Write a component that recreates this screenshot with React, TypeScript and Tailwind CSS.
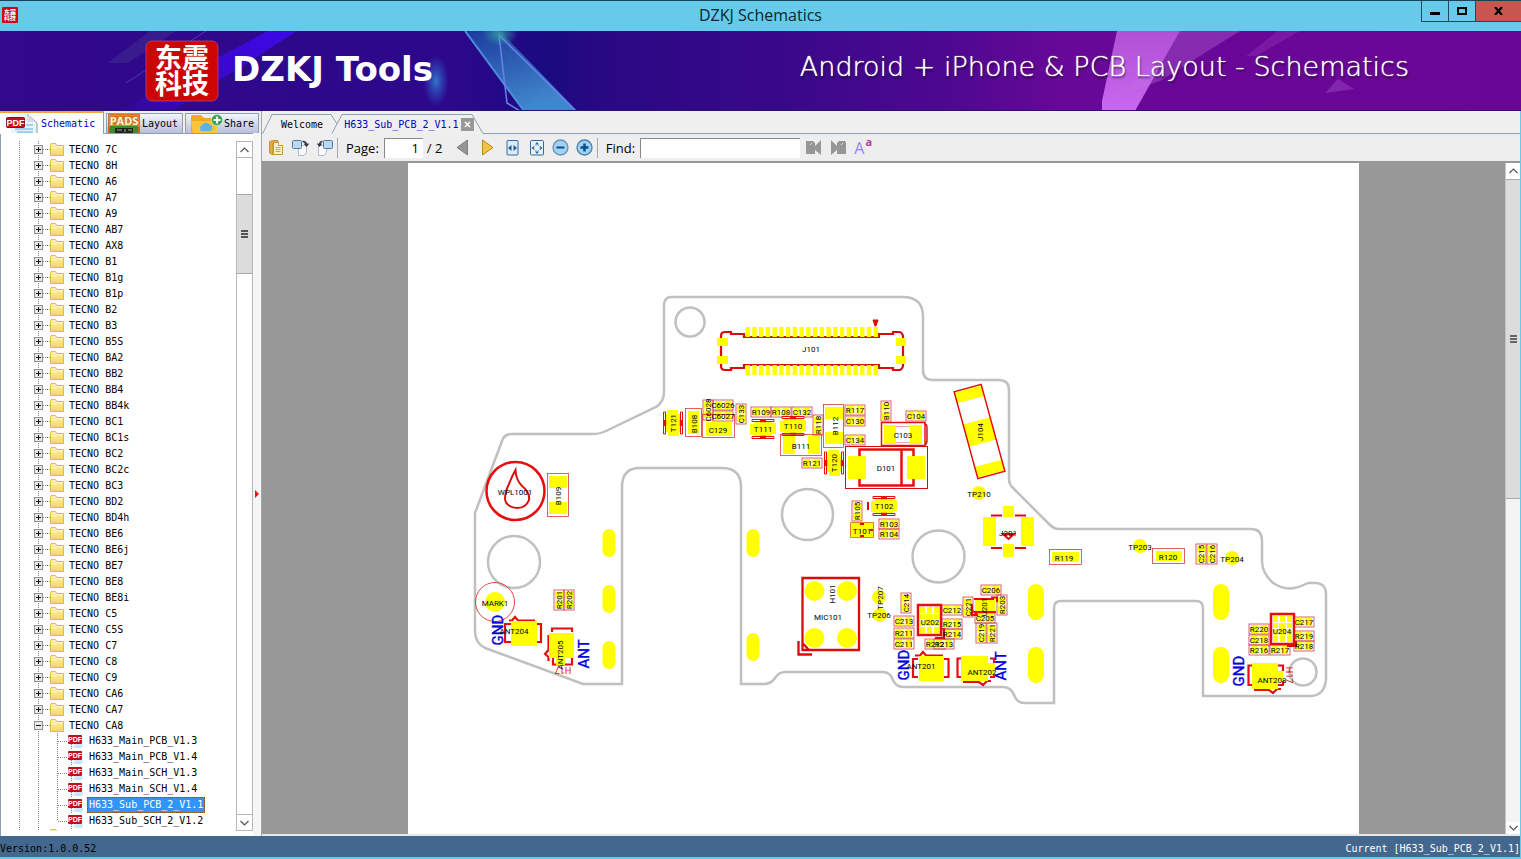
import React, { useState } from 'react';

const MODELS = [
  '7C', '8H', 'A6', 'A7', 'A9', 'AB7', 'AX8', 'B1', 'B1g', 'B1p', 'B2', 'B3', 'B5S',
  'BA2', 'BB2', 'BB4', 'BB4k', 'BC1', 'BC1s', 'BC2', 'BC2c', 'BC3', 'BD2', 'BD4h',
  'BE6', 'BE6j', 'BE7', 'BE8', 'BE8i', 'C5', 'C5S', 'C7', 'C8', 'C9', 'CA6', 'CA7', 'CA8',
];

const FILES = [
  'H633_Main_PCB_V1.3',
  'H633_Main_PCB_V1.4',
  'H633_Main_SCH_V1.3',
  'H633_Main_SCH_V1.4',
  'H633_Sub_PCB_2_V1.1',
  'H633_Sub_SCH_2_V1.2',
];

/* ---------- icons ---------- */

const Seal = ({ className, height }: { className: string; height: number }) => (
  <svg viewBox={`0 0 72 ${height}`} className={`overflow-visible ${className}`} aria-hidden="true">
    <rect width="72" height={height} rx="6" fill="#cc0505" stroke="#e0506a" strokeWidth="0.6" />
    <g fill="#fff" fontFamily='"Noto Sans CJK SC", sans-serif' fontWeight="700" fontSize="27" textAnchor="middle">
      <text x="36" y={height / 2 - 3}>东震</text>
      <text x="36" y={height / 2 + 23}>科技</text>
    </g>
  </svg>
);

const FolderIcon = () => (
  <svg width="14" height="13" viewBox="0 0 14 13" className="shrink-0" aria-hidden="true">
    <defs>
      <linearGradient id="fold" x1="0" y1="0" x2="0" y2="1">
        <stop offset="0" stopColor="#fff3b0" />
        <stop offset="1" stopColor="#f3d566" />
      </linearGradient>
    </defs>
    <path d="M0.5 12.5V1.5Q0.5 0.5 1.5 0.5H5.5L7 2.5H13.5V12.5Z" fill="url(#fold)" stroke="#dfb94e" />
    <path d="M1 5H6L7 4H13" stroke="#fff8cf" fill="none" />
  </svg>
);

const PdfIcon = () => (
  <svg width="16" height="16" viewBox="0 0 16 16" className="shrink-0" aria-hidden="true">
    <path d="M4 1H13L15 3V15H4Z" fill="#eef7fd" />
    <path d="M7 12H15M6 14H14" stroke="#a9d8ef" />
    <path d="M3.5 11V16" stroke="#889" strokeDasharray="1 1" />
    <rect x="0" y="2" width="14" height="9" rx="1" fill="#c01020" />
    <text x="7" y="9" fontSize="7" fontWeight="700" fill="#fff" textAnchor="middle" fontFamily='"Liberation Sans", sans-serif'>PDF</text>
  </svg>
);

const PdfTabIcon = () => (
  <svg width="33" height="19" viewBox="0 0 33 19" className="shrink-0" aria-hidden="true">
    <path d="M5 0H22L31 9V19H5Z" fill="#eaf4fb" />
    <path d="M21 0L31 9V19" fill="none" stroke="#8a98a8" />
    <path d="M21 0V8H30Z" fill="#d5dde6" />
    <path d="M9 15H27M11 18H27M20 11H27" stroke="#86c4ea" strokeWidth="1.5" />
    <rect x="0.5" y="3.5" width="18" height="10" rx="1" fill="#c4121c" stroke="#8c0a10" />
    <text x="9.5" y="12" fontSize="9" fontWeight="700" fill="#fff" textAnchor="middle" fontFamily='"Liberation Sans", sans-serif'>PDF</text>
  </svg>
);

const PadsIcon = () => (
  <svg width="32" height="19" viewBox="0 0 32 19" className="shrink-0 overflow-visible" aria-hidden="true">
    <rect width="32" height="19" fill="#c9651c" />
    <rect x="1" y="1" width="30" height="11" fill="#d8762a" stroke="#f0b070" strokeWidth="0.5" />
    <text x="16" y="11" fontSize="11" fontWeight="700" fill="#fff6d8" textAnchor="middle" fontFamily='"Open Sans", sans-serif'>PADS</text>
    <rect x="2" y="12" width="28" height="7" fill="#3f8a2a" />
    <path d="M7 14H25V19H7Z" fill="#222" />
    <path d="M9 16H14M17 15V18M20 16H24" stroke="#8cc060" />
  </svg>
);

const ShareIcon = () => (
  <svg width="33" height="19" viewBox="0 0 33 19" className="shrink-0" aria-hidden="true">
    <path d="M1 3Q1 1 3 1H11L14 4H27V19H1Z" fill="#f5a81c" />
    <path d="M1 7H27V19H3Z" fill="#fcc43a" />
    <path d="M11 17A4 4 0 0 1 12 11A4.5 4.5 0 0 1 19 10A4 4 0 0 1 21 17Z" fill="#5ab4ea" />
    <circle cx="27" cy="6" r="5.5" fill="#2fa04a" stroke="#dff3e0" strokeWidth="0.6" />
    <path d="M27 2.5V9.5M23.5 6H30.5" stroke="#fff" strokeWidth="2.2" />
  </svg>
);

const Chevron = ({ d }: { d: string }) => (
  <svg width="9" height="6" viewBox="0 0 9 6" aria-hidden="true">
    <path d={d} fill="none" stroke="#555" strokeWidth="1.2" />
  </svg>
);

/* ---------- window chrome ---------- */

const TitleBar = () => (
  <header className="relative flex h-[31px] shrink-0 items-start justify-between border-t border-[#174459] bg-[#66cbea]">
    <Seal className="mt-1.5 ml-0.5 h-4 w-4" height={72} />
    <h1 className="absolute inset-x-0 top-0 text-center font-['Open_Sans',sans-serif] text-base leading-[29px] text-[#0c2530]">
      DZKJ Schematics
    </h1>
    <div className="relative flex h-[21px]">
      <button aria-label="Minimize" className="flex w-7 items-center justify-center border border-t-0 border-[#1d4a5c]">
        <span className="mt-1 h-[3px] w-2.5 bg-black" />
      </button>
      <button aria-label="Maximize" className="flex w-[26px] items-center justify-center border-b border-[#1d4a5c]">
        <span className="h-2 w-2.5 border-2 border-black" />
      </button>
      <button aria-label="Close" className="flex w-[46px] items-center justify-center border-b border-l border-[#1d4a5c] bg-[#c75650]">
        <svg width="9" height="8" viewBox="0 0 9 8" aria-hidden="true">
          <path d="M1 0L8 8M8 0L1 8" stroke="#000" strokeWidth="2.2" />
        </svg>
      </button>
    </div>
  </header>
);

const Banner = () => (
  <div className="relative flex h-20 shrink-0 items-center justify-between overflow-hidden pr-28 pl-[146px]">
    <svg viewBox="0 0 1521 80" preserveAspectRatio="none" className="absolute inset-0 h-full w-full" aria-hidden="true">
      <defs>
        <linearGradient id="bn">
          <stop offset="0" stopColor="#32088c" />
          <stop offset="0.3" stopColor="#2c088a" />
          <stop offset="0.36" stopColor="#1a0a80" />
          <stop offset="0.4" stopColor="#2a0884" />
          <stop offset="0.52" stopColor="#3a088a" />
          <stop offset="0.62" stopColor="#4c0890" />
          <stop offset="0.7" stopColor="#680898" />
          <stop offset="1" stopColor="#6a0696" />
        </linearGradient>
        <linearGradient id="ray" x1="1" y1="0" x2="0" y2="1">
          <stop offset="0" stopColor="#3c08e8" />
          <stop offset="0.7" stopColor="#3c08d0" stopOpacity="0.8" />
          <stop offset="1" stopColor="#3c08d0" stopOpacity="0.1" />
        </linearGradient>
        <linearGradient id="shard" x1="0" y1="0" x2="0.4" y2="1">
          <stop offset="0" stopColor="#1c3a9c" />
          <stop offset="1" stopColor="#3f86cc" />
        </linearGradient>
        <linearGradient id="pink" x1="0" y1="0" x2="0" y2="1">
          <stop offset="0" stopColor="#b050d4" />
          <stop offset="1" stopColor="#c868f0" />
        </linearGradient>
        <radialGradient id="glow">
          <stop offset="0" stopColor="#2f80c8" stopOpacity="0.9" />
          <stop offset="1" stopColor="#2f60d8" stopOpacity="0" />
        </radialGradient>
        <radialGradient id="tip">
          <stop offset="0" stopColor="#38a8a8" stopOpacity="0.8" />
          <stop offset="1" stopColor="#38a8a8" stopOpacity="0" />
        </radialGradient>
      </defs>
      <rect width="1521" height="80" fill="url(#bn)" />
      <path d="M268 0H297L172 80H118Z" fill="url(#ray)" />
      <path d="M150 0H176L128 32H108Z" fill="#3d2a90" opacity="0.6" />
      <path d="M206 0L126 52" stroke="#4a3aa8" />
      <ellipse cx="436" cy="50" rx="13" ry="26" fill="url(#glow)" />
      <path d="M465 0H500L577 80H524Z" fill="url(#shard)" />
      <path d="M465 0L524 80" stroke="#4f8cdc" strokeWidth="2" />
      <path d="M499 4L576 80M499 4L507 72L520 80" stroke="#6a80ea" strokeWidth="1.5" fill="none" />
      <ellipse cx="500" cy="3" rx="18" ry="12" fill="url(#tip)" />
      <path d="M1117 0H1180L1135 80H1102V70Z" fill="url(#pink)" />
      <path d="M1180 0H1240L1160 50L1104 70L1160 36Z" fill="#c070e0" opacity="0.35" />
      <path d="M1278 0H1300L1256 25H1246Z" fill="#c070e0" opacity="0.18" />
      <path d="M1338 48L1354 58L1325 62Z" fill="#b060d8" opacity="0.35" />
      <rect y="79" width="1521" height="1" fill="#28107a" />
    </svg>
    <div className="relative flex items-center gap-3.5">
      <Seal className="h-[60px] w-[72px]" height={60} />
      <span className="pb-1 font-['DejaVu_Sans',sans-serif] text-[34px] leading-10 font-bold text-white">DZKJ Tools</span>
    </div>
    <span className="relative pb-2 font-['DejaVu_Sans',sans-serif] text-[27px] leading-8 font-extralight whitespace-nowrap text-white [text-shadow:0_0_1px_#fff,1px_2px_2px_rgba(0,0,0,0.6)]">
      Android + iPhone &amp; PCB Layout - Schematics
    </span>
  </div>
);

/* ---------- left panel ---------- */

const SideTabs = () => (
  <div role="tablist" className="flex h-[23px] shrink-0 items-end gap-0.5 border-b border-[#8d9fb4] bg-[#efefef]">
    <button
      role="tab"
      aria-selected="true"
      className="-mb-px flex h-[23px] w-[104px] items-center gap-0.5 border-t-2 border-r border-t-[#f0a53a] border-r-[#8d9fb4] bg-white pl-1.5 text-[#0000c8]"
    >
      <PdfTabIcon />
      Schematic
    </button>
    <button role="tab" className="flex h-5 w-[77px] items-center gap-0.5 border border-b-0 border-[#8d9fb4] bg-linear-to-b from-[#f4f5fb] to-[#b9bedb] pl-px">
      <PadsIcon />
      Layout
    </button>
    <button role="tab" className="flex h-5 w-[74px] items-center gap-px border border-b-0 border-[#8d9fb4] bg-linear-to-b from-[#f4f5fb] to-[#b9bedb] pl-1">
      <ShareIcon />
      Share
    </button>
  </div>
);

const Toggle = ({ open }: { open: boolean }) => (
  <svg width="16" height="16" viewBox="0 0 16 16" className="shrink-0" aria-hidden="true">
    <path d="M4.5 0V16" stroke="#888" strokeDasharray="1 1" />
    <path d="M9 8.5H16" stroke="#888" strokeDasharray="1 1" />
    <rect x="0.5" y="4.5" width="8" height="8" fill="#e8e8ec" stroke="#909090" />
    <path d={open ? 'M2 8.5H7' : 'M2 8.5H7M4.5 6V11'} stroke="#111" />
  </svg>
);

const Tree = () => {
  const [selected, setSelected] = useState('H633_Sub_PCB_2_V1.1');
  return (
    <ul className="min-w-0 flex-1 overflow-hidden bg-[linear-gradient(#888_50%,transparent_50%)] bg-[length:1px_2px] bg-[position:19px_0] bg-repeat-y">
      {MODELS.map(m => (
        <li key={m} className="flex h-4 items-center pl-[34px]">
          <Toggle open={m === 'CA8'} />
          <FolderIcon />
          <span className="pt-0.5 pl-[5px]">TECNO {m}</span>
        </li>
      ))}
      {FILES.map((f, i) => (
        <li key={f} className="flex h-4 items-center pl-[34px]">
          <svg width="34" height="16" viewBox="0 0 34 16" className="shrink-0" aria-hidden="true">
            <path d={`M4.5 0V16M23.5 0V${i === FILES.length - 1 ? 8 : 16}M24 8.5H34`} stroke="#888" strokeDasharray="1 1" />
          </svg>
          <PdfIcon />
          <button
            onClick={() => setSelected(f)}
            className={`ml-[3px] h-4 px-0.5 leading-4 ${f === selected ? 'bg-[#2f94fb] text-white outline outline-dotted outline-[#7a4a10] -outline-offset-1' : ''}`}
          >
            {f}
          </button>
        </li>
      ))}
      <li className="flex h-4 items-start pl-[34px]">
        <Toggle open={false} />
        <FolderIcon />
      </li>
    </ul>
  );
};

const SidePanel = () => (
  <aside className="flex w-[262px] shrink-0 flex-col border-r border-[#a0a6ac]">
    <SideTabs />
    <div className="flex min-h-0 flex-1 border-l border-[#8d9fb4] bg-white pt-[7px] pb-[5px]">
      <div className="-ml-px flex min-w-0 flex-1">
        <Tree />
      </div>
      <div className="flex w-[17px] flex-col border border-[#b8b8b8] bg-white">
        <button aria-label="Scroll up" className="flex h-4 items-center justify-center border-b border-[#b8b8b8]">
          <Chevron d="M0.5 5L4.5 1L8.5 5" />
        </button>
        <div className="mt-9 flex h-20 flex-col items-center justify-center gap-px border-y border-[#a8a8a8] bg-[#dcdcdc]">
          <span className="h-0.5 w-[7px] bg-[#555]" />
          <span className="h-0.5 w-[7px] bg-[#555]" />
          <span className="h-0.5 w-[7px] bg-[#555]" />
        </div>
        <button aria-label="Scroll down" className="mt-auto flex h-4 items-center justify-center border-t border-[#b8b8b8]">
          <Chevron d="M0.5 1L4.5 5L8.5 1" />
        </button>
      </div>
      <div className="-my-2 flex w-2 items-center justify-center bg-[#f6f6f6]">
        <svg width="5" height="8" viewBox="0 0 5 8" className="mt-4" aria-hidden="true">
          <path d="M0 0L4 4L0 8Z" fill="#f01010" />
        </svg>
      </div>
    </div>
  </aside>
);

/* ---------- document area ---------- */

const DocTabs = () => (
  <div role="tablist" className="relative flex h-[23px] shrink-0 items-center bg-[#efefef] pt-1">
    <svg className="absolute inset-0 h-full w-full" aria-hidden="true">
      <path d="M0 22.5L1 22L10 3.5H69L75 13" fill="none" stroke="#8d9fb4" />
      <path d="M70 22.5L80 3.5H210L221 22.5H4000" fill="none" stroke="#8d9fb4" />
    </svg>
    <button role="tab" className="relative ml-[19px]">Welcome</button>
    <button role="tab" aria-selected="true" className="relative ml-[21px] text-[#0000c8]">H633_Sub_PCB_2_V1.1</button>
    <button aria-label="Close tab" className="relative ml-0.5 flex h-[13px] w-[13px] items-center justify-center bg-[#989898]">
      <svg width="7" height="7" viewBox="0 0 7 7" aria-hidden="true">
        <path d="M1 1L6 6M6 1L1 6" stroke="#fff" strokeWidth="1.6" />
      </svg>
    </button>
  </div>
);

const PageBlue = () => <rect x="0.5" y="0.5" width="9" height="8" rx="1" fill="#b9d8f2" stroke="#55789c" />;

const Toolbar = () => (
  <div className="flex h-[29px] shrink-0 items-center border-b-2 border-[#989898] bg-[#eee] font-['Open_Sans',sans-serif] text-[13px] leading-5">
    <div className="flex items-center gap-2 pl-[7px]">
      <button aria-label="Open">
        <svg width="15" height="16" viewBox="0 0 15 16" className="block">
          <path d="M0.5 1.5L4 0.5H9V3H4V15L0.5 13Z" fill="#e8a840" stroke="#b98530" strokeWidth="0.8" />
          <path d="M4.5 2.5H9.500V5.5H13.5V14.5H4.5Z" fill="#fdf0c8" stroke="#c8963c" />
          <path d="M6.5 7.500H11.5M6.5 9.5H11.5M6.5 11.5H11.5" stroke="#d4a24c" />
        </svg>
      </button>
      <button aria-label="Rotate right">
        <svg width="17" height="16" viewBox="0 0 17 16" className="block">
          <path d="M6.5 5.5H14.5V12.5L12 15.5H6.5Z" fill="#f8f9fa" stroke="#b4bcc6" />
          <PageBlue />
          <path d="M10.5 1.5Q14.5 1.5 14.5 5M12.5 3.5L14.5 6L16.5 3.5" fill="none" stroke="#334" strokeWidth="1.3" />
        </svg>
      </button>
      <button aria-label="Rotate left">
        <svg width="17" height="16" viewBox="0 0 17 16" className="block">
          <path d="M1.5 5.5H9.5V12.5L7 15.5H1.5Z" fill="#f8f9fa" stroke="#b4bcc6" />
          <g transform="translate(6 0)"><PageBlue /></g>
          <path d="M5.5 1.5Q2.5 1.5 2.5 5M0.5 3.5L2.5 6L4.5 3.5" fill="none" stroke="#334" strokeWidth="1.3" />
        </svg>
      </button>
    </div>
    <span className="ml-[3px] h-5 w-px bg-[#a8a8a8]" />
    <label htmlFor="page" className="ml-2">Page:</label>
    <input id="page" defaultValue="1" className="ml-[5px] h-5 w-[39px] border-t border-l border-[#888] bg-white pr-1 text-right outline-none" />
    <span className="ml-1 w-7">/ 2</span>
    <div className="flex items-center gap-2 pl-px">
      <button aria-label="Previous page" className="mr-1">
        <svg width="13" height="17" viewBox="0 0 13 17" className="block"><path d="M11.5 1V16L1 8.5Z" fill="#969696" stroke="#808080" /></svg>
      </button>
      <button aria-label="Next page" className="mr-1">
        <svg width="13" height="17" viewBox="0 0 13 17" className="block"><path d="M1.5 1V16L12 8.5Z" fill="#f2c33c" stroke="#b98a20" /></svg>
      </button>
      <button aria-label="Fit width">
        <svg width="14" height="16" viewBox="0 0 14 16" className="block">
          <rect x="1" y="0.5" width="11" height="14.5" rx="1" fill="#d8ecfb" stroke="#3c6896" />
          <path d="M5.5 5V11L2 8ZM7.5 5V11L11 8Z" fill="#1c5a96" />
        </svg>
      </button>
      <button aria-label="Fit page" className="ml-0.5">
        <svg width="14" height="16" viewBox="0 0 14 16" className="block">
          <rect x="0.5" y="0.5" width="13" height="14.5" rx="1" fill="#e4f2fc" stroke="#3c6896" />
          <path d="M7 2L9 4.5H5ZM7 14L5 11.5H9ZM1.5 8L4 6V10ZM12.5 8L10 6V10Z" fill="#2a6298" />
          <circle cx="7" cy="8" r="3" fill="none" stroke="#6f9cc6" strokeDasharray="1.5 1" />
        </svg>
      </button>
      <button aria-label="Zoom out">
        <svg width="17" height="17" viewBox="0 0 17 17" className="block">
          <circle cx="8.5" cy="8.5" r="7.5" fill="#9ed3f6" stroke="#6f8fae" strokeWidth="1.3" />
          <path d="M4.5 8.5H12.5" stroke="#0a4f8c" strokeWidth="2" />
        </svg>
      </button>
      <button aria-label="Zoom in" className="-ml-px">
        <svg width="17" height="17" viewBox="0 0 17 17" className="block">
          <circle cx="8.5" cy="8.5" r="7.5" fill="#9ed3f6" stroke="#4f7fae" strokeWidth="1.3" />
          <path d="M4.5 8.5H12.5M8.5 4.5V12.5" stroke="#0a4f8c" strokeWidth="2.5" />
        </svg>
      </button>
    </div>
    <span className="ml-1 h-5 w-px bg-[#a8a8a8]" />
    <label htmlFor="find" className="ml-2">Find:</label>
    <input id="find" className="ml-[5px] h-5 w-40 border-t border-l border-[#888] bg-white px-1 outline-none" />
    <div className="ml-1.5 flex items-center gap-2.5">
      <button aria-label="Find previous">
        <svg width="15" height="15" viewBox="0 0 15 15" className="block">
          <path d="M0 1H7L9 3V6L15 0V15L9 10V14H0Z" fill="#969696" />
          <path d="M4 5L6 3" stroke="#ddd" />
        </svg>
      </button>
      <button aria-label="Find next">
        <svg width="15" height="15" viewBox="0 0 15 15" className="block">
          <path d="M0 0L6 6V3L8 1H14L15 3V14H6V10L0 15Z" fill="#969696" />
          <path d="M10 5L12 3" stroke="#ddd" />
        </svg>
      </button>
      <button aria-label="Match case" className="relative -ml-0.5 flex h-4 w-4 items-end text-base leading-none text-[#9186f0]">
        A<sup className="absolute -top-1 -right-0.5 text-[11px] leading-none font-bold text-[#b23c9c]">a</sup>
      </button>
    </div>
  </div>
);

/* ---------- board drawing ---------- */

type Part = [string, number, number];

// 20x10 passives, by centre
const FLAT: Part[] = [
  ['C6026', 723, 405], ['C6027', 723, 416], ['R109', 761, 412], ['R108', 781, 412], ['C132', 802, 412],
  ['R117', 855, 410], ['C130', 855, 421], ['C134', 855, 440], ['C104', 916, 416], ['R121', 812, 463],
  ['R103', 889, 524], ['R104', 889, 534], ['C213', 904, 621], ['R211', 904, 633], ['C211', 904, 644],
  ['C212', 952, 610], ['R215', 952, 624], ['R214', 952, 634], ['R212', 935, 644], ['R213', 944, 644],
  ['C206', 991, 590], ['C205', 985, 618], ['C217', 1304, 622], ['R219', 1304, 636], ['R218', 1304, 646],
  ['R220', 1259, 629], ['C218', 1259, 640], ['R216', 1259, 650], ['R217', 1280, 650],
];

const UPRIGHT: Part[] = [
  ['C6028', 708, 410], ['C133', 741, 414], ['R118', 818, 425], ['B110', 886, 411], ['R105', 857, 511],
  ['C214', 906, 603], ['C221', 968, 607], ['R203', 1002, 605], ['C219', 981, 633], ['R221', 992, 633],
  ['R201', 559, 600], ['R202', 569, 600], ['C215', 1201, 554], ['C216', 1212, 554],
];

const TRANSISTORS: [string, number, number, boolean][] = [
  ['T121', 673, 423, true], ['T120', 834, 463, true],
  ['T111', 763, 429, false], ['T110', 793, 426, false], ['T102', 884, 506, false],
];

const SLOTS: [number, number, number, number][] = [
  [609, 543, 13, 28], [609, 599, 13, 28], [609, 655, 13, 28], [753, 543, 13, 28], [753, 647, 13, 28],
  [1036, 602, 16, 36], [1036, 665, 16, 36], [1221, 602, 16, 36], [1221, 665, 16, 36],
];

const OUTLINE =
  'M671 297H903Q923 297 923 317V370Q923 380 933 380H999Q1009 380 1009 390V480Q1009 484 1013 488L1050 525Q1054 529 1059 529' +
  'H1251Q1262 529 1262 541V561Q1262 573 1273 583Q1284 590 1294 588Q1300 587 1308 583H1317Q1326 584 1326 594V679Q1325 695 1311 696' +
  'H1203V608Q1203 601 1196 601H1061Q1054 601 1054 608V703H1025Q1017 703 1014 695Q1011 687 1003 687H903Q896 687 893 680' +
  'Q890 672 883 672H785Q779 672 775 678Q771 684 764 684H741V487Q741 468 722 468H640Q622 468 622 487V684H583L485 648' +
  'Q475 643 475 631V513L502 441Q504 434 512 434H592Q600 434 606 431L656 407Q664 402 664 392V306Q664 297 671 297Z';

const Tag = ({ t, x, y, r = 0 }: { t: string; x: number; y: number; r?: number }) => (
  <text x={x} y={y + 3} transform={`rotate(${r} ${x} ${y})`}>{t}</text>
);

const Box = ({ x, y, w, h }: { x: number; y: number; w: number; h: number }) => (
  <rect x={x} y={y} width={w} height={h} fill="none" stroke="#d83a3a" strokeWidth="0.8" />
);

const Pad = ({ x, y, w, h }: { x: number; y: number; w: number; h: number }) => (
  <rect x={x} y={y} width={w} height={h} fill="#ff0" />
);

const Grid = ({ x, y }: { x: number; y: number }) => (
  <g>
    {[0, 7, 14].map(dx => [0, 20].map(dy => <Pad key={`${dx}-${dy}`} x={x + 2 + dx} y={y + 2 + dy} w={5} h={6} />))}
    {[0, 14].map(dx => [7, 14].map(dy => <Pad key={`${dx}-${dy}`} x={x + 2 + dx} y={y + 2 + dy} w={5} h={5} />))}
    <Pad x={x + 8} y={y + 9} w={7} h={12} />
    <rect x={x} y={y} width="23" height="30" fill="none" stroke="#e80c0c" strokeWidth="2.5" />
  </g>
);

const Board = () => (
  <svg viewBox="408 163 951 670" className="block w-full" role="img" aria-label="H633 sub board placement">
    <g fill="none" stroke="#c0c0c0" strokeWidth="2.5">
      <path d={OUTLINE} />
      <circle cx="690" cy="322" r="14.5" />
      <circle cx="514" cy="562" r="26" />
      <circle cx="807.5" cy="514.5" r="25.5" />
      <circle cx="938.5" cy="556.5" r="26" />
      <circle cx="1303" cy="672" r="13.5" />
    </g>

    {SLOTS.map(([x, y, w, h]) => (
      <rect key={`${x}-${y}`} x={x - w / 2} y={y - h / 2} width={w} height={h} rx={w / 2} fill="#ff0" />
    ))}
    {[[979, 493], [1140, 546], [1232, 558], [879, 597], [880, 615]].map(([x, y]) => (
      <circle key={`${x}-${y}`} cx={x} cy={y} r="7" fill="#ff0" />
    ))}

    {/* J101 */}
    <path
      d="M744 337H879V334H893V332H899Q902 332 903 336V366Q902 370 899 370H893V368H879V365H744V368H731V370H725Q721 370 721 366V336Q721 332 725 332H731V334H744Z"
      fill="none"
      stroke="#d80c0c"
      strokeWidth="2.2"
    />
    {Array.from({ length: 20 }, (_, i) => (
      <g key={i}>
        <Pad x={745.5 + i * 6.74} y={327} w={4.4} h={10} />
        <Pad x={745.5 + i * 6.74} y={365} w={4.4} h={10} />
      </g>
    ))}
    <Pad x={717} y={338} w={11} h={8} />
    <Pad x={717} y={356} w={11} h={8} />
    <Pad x={896} y={338} w={10} h={8} />
    <Pad x={896} y={356} w={10} h={8} />
    <path d="M873 320H878L876 326H875Z" fill="#d80c0c" stroke="#d80c0c" />

    {FLAT.map(([t, x, y]) => (
      <g key={t}>
        <rect x={x - 7.5} y={y - 4} width="15" height="8" fill="#ffffa0" />
        <Pad x={x - 8} y={y - 4} w={6} h={8} />
        <Pad x={x + 2} y={y - 4} w={6} h={8} />
        <Box x={x - 10} y={y - 5} w={20} h={10} />
      </g>
    ))}
    {UPRIGHT.map(([t, x, y]) => (
      <g key={t}>
        <rect x={x - 4} y={y - 7.5} width="8" height="15" fill="#ffffa0" />
        <Pad x={x - 4} y={y - 8} w={8} h={6} />
        <Pad x={x - 4} y={y + 2} w={8} h={6} />
        <Box x={x - 5} y={y - 10} w={10} h={20} />
      </g>
    ))}
    {TRANSISTORS.map(([t, x, y, up]) => (
      <g key={t} transform={`translate(${x} ${y}) rotate(${up ? 90 : 0})`}>
        <path d="M-11 -9.5H11V-7.5H-11ZM-11 7.5H11V9.5H-11Z" fill="#fff" stroke="#e80c0c" />
        <path d="M-9 -7H9V-6H13V5H9V7H-9V6H-13V-5H-9Z" fill="#ff0" />
        <path d="M-3 -8H3M-3 8H3" stroke="#e80c0c" strokeWidth="2.5" />
      </g>
    ))}

    {/* bigger passives */}
    <Box x={685.5} y={408.5} w={16} h={28} />
    <Pad x={688} y={411} w={11} h={23} />
    <Box x={702.5} y={414.5} w={32} h={23} />
    <Pad x={706} y={422} w={26} h={14} />
    <Box x={780.5} y={434.5} w={41} h={21} />
    <Pad x={783} y={436} w={12} h={18} />
    <Pad x={808} y={436} w={12} h={18} />
    <Box x={823.5} y={404.5} w={20} h={43} />
    <Pad x={825} y={407} w={18} h={12} />
    <Pad x={825} y={432} w={18} h={12} />
    <Box x={547.5} y={473.5} w={21} h={43} />
    <Pad x={549} y={476} w={18} h={12} />
    <Pad x={549} y={502} w={18} h={12} />
    <Box x={1049.5} y={549.5} w={32} h={15} />
    <Pad x={1052} y={552} w={27} h={10} />
    <Box x={1152.5} y={548.5} w={32} h={15} />
    <Pad x={1156} y={551} w={26} h={10} />

    {/* C103 */}
    <Pad x={884} y={425} w={12} h={19} />
    <Pad x={910} y={425} w={12} h={19} />
    <path d="M896 426.5H910M896 442.5H910" stroke="#e89090" strokeWidth="0.8" />
    <path d="M881.5 422.5H925V445.5H881.5ZM925 424Q927 424 927 428V440Q927 444 925 445" fill="none" stroke="#e01010" strokeWidth="1.5" />

    {/* D101 */}
    <rect x="845.5" y="446.5" width="82" height="42" fill="none" stroke="#d80c0c" />
    <path d="M859.5 456V449.5H913.5V456M859.5 479V485.5H913.5V479M901.5 449V486" fill="none" stroke="#e80c0c" strokeWidth="2.5" />
    <Pad x={848} y={456} w={18} h={23} />
    <Pad x={907} y={456} w={18} h={23} />

    {/* T101 */}
    <Pad x={850} y={522} w={24} h={15} />
    <path d="M850.5 522.5H873.5V537.5H850.5Z" fill="none" stroke="#e08030" />
    <path d="M860 524H864M860 536H864M870 530H873M868 502V510" stroke="#d80c0c" strokeWidth="2" />

    {/* J104 */}
    <g transform="translate(979.5 431.5) rotate(-15.3)">
      <Pad x={-14} y={-44} w={28} h={11} />
      <Pad x={-14} y={-11} w={28} h={23} />
      <Pad x={-14} y={33} w={28} h={11} />
      <rect x="-14" y="-45" width="28" height="90" fill="none" stroke="#e01010" strokeWidth="1.5" />
    </g>

    {/* J201 */}
    <Pad x={983} y={517} w={13} h={29} />
    <Pad x={1021} y={517} w={13} h={29} />
    <Pad x={1003} y={506} w={11} h={11} />
    <Pad x={1003} y={544} w={11} h={13} />
    <path d="M991 515.5H1002M1015 515.5H1026M991 548H1002M1015 548H1026" stroke="#d01010" strokeWidth="2" />
    <path d="M1003 534H1014L1008.5 539Z" fill="none" stroke="#d80c0c" strokeWidth="2" />

    {/* WPL1001 and MARK1 */}
    <circle cx="515.5" cy="491" r="29" fill="none" stroke="#e80c0c" strokeWidth="2.5" />
    <path d="M515.5 470Q516 480 522 486Q530 492 529 500Q526 508 517 508Q506 507 505 499Q505 492 509 484Q512 476 515.5 470Z" fill="none" stroke="#d80c0c" strokeWidth="2" />
    <circle cx="495" cy="602" r="10" fill="#ff0" />
    <circle cx="495" cy="602" r="19.5" fill="none" stroke="#d84a4a" />

    {/* MIC101 */}
    {[[814.5, 591], [847, 591], [814.5, 638], [847, 638]].map(([x, y]) => (
      <circle key={`${x}-${y}`} cx={x} cy={y} r="10" fill="#ff0" />
    ))}
    <path d="M802.5 578H859V650H802.5ZM802.5 643L809 650M798.5 641V654.5H812" fill="none" stroke="#d80c0c" strokeWidth="2.3" />

    {/* ICs */}
    <Grid x={918} y={605} />
    <Grid x={1271} y={614} />
    <path d="M944 628V638H935M1296 641V646H1287" fill="none" stroke="#d80c0c" strokeWidth="2" />
    <Pad x={975} y={598} w={20} h={15} />
    <path d="M974 599H994M974 612H996M991 597.5H997V602M972 604V615H978M973 611L977 614" fill="none" stroke="#e80c0c" strokeWidth="2" />

    {/* antenna contacts */}
    <g fill="none" stroke="#e80c0c" strokeWidth="2.2">
      <path d="M509 620.5H512L515 617L518 620.5H535M536 624H541V642H536M511 624H505V642H511" />
      <path d="M552 632V628.5H572V632M548.5 635V650L545 654L548.5 657V661M553 657V664.5H572V657" />
      <path d="M915 655.5H920L923 652L926 655.5H943M944 659H948.5V677H944M918 659H913V677H918" />
      <path d="M962 658.5H957.5V677H962M990 658.5H994V664M994 672V677H990M963 682H979L983 685L987 681H991" />
      <path d="M1253 665.5H1248.5V685H1253M1278 665.5H1283V671M1283 680V685H1278M1254 690H1269L1273 693L1277 689H1281" />
    </g>
    <Pad x={511} y={621} w={26} h={25} />
    <Pad x={549} y={633} w={25} h={25} />
    <Pad x={556} y={656} w={9} h={9} />
    <Pad x={919} y={656} w={25} h={25} />
    <Pad x={961} y={656} w={27} h={25} />
    <Pad x={988} y={663} w={7} h={12} />
    <Pad x={1252} y={663} w={26} h={26} />
    <Pad x={1277} y={671} w={6} h={10} />

    <g fill="#00d" fontFamily="Roboto, sans-serif" fontSize="15" textAnchor="middle" stroke="#00d" strokeWidth="0.4">
      <text transform="translate(503 630) rotate(-90)">GND</text>
      <text transform="translate(589 654) rotate(-90)">ANT</text>
      <text transform="translate(909 665) rotate(-90)">GND</text>
      <text transform="translate(1006 666) rotate(-90)">ANT</text>
      <text transform="translate(1244 671) rotate(-90)">GND</text>
    </g>
    <g fill="#d80c0c" fontFamily="Roboto, sans-serif" fontSize="9" textAnchor="middle">
      <text transform="translate(563 667) rotate(180)">H17</text>
      <text transform="translate(1286 675) rotate(90)">H17</text>
    </g>

    <g fill="#000" fontFamily="Roboto, sans-serif" fontSize="8" textAnchor="middle">
      {FLAT.map(([t, x, y]) => <Tag key={t} t={t} x={x} y={y} />)}
      {UPRIGHT.map(([t, x, y]) => <Tag key={t} t={t} x={x} y={y} r={-90} />)}
      {TRANSISTORS.map(([t, x, y, up]) => <Tag key={t} t={t} x={x} y={y} r={up ? -90 : 0} />)}
      <Tag t="J101" x={811} y={349} />
      <Tag t="B108" x={694} y={424} r={-90} />
      <Tag t="C129" x={718} y={430} />
      <Tag t="B111" x={801} y={446} />
      <Tag t="B112" x={835} y={426} r={-90} />
      <Tag t="B109" x={558} y={496} r={-90} />
      <Tag t="C103" x={903} y={435} />
      <Tag t="D101" x={886} y={468} />
      <Tag t="T101" x={862} y={531} />
      <Tag t="J104" x={980} y={432} r={-90} />
      <Tag t="TP210" x={979} y={494} />
      <Tag t="J201" x={1008} y={533} />
      <Tag t="R119" x={1064} y={558} />
      <Tag t="R120" x={1168} y={557} />
      <Tag t="TP203" x={1140} y={547} />
      <Tag t="TP204" x={1232} y={559} />
      <Tag t="WPL1001" x={515} y={492} />
      <Tag t="MARK1" x={495} y={603} />
      <Tag t="ANT204" x={514} y={631} />
      <Tag t="ANT205" x={560} y={655} r={-90} />
      <Tag t="H101" x={832} y={594} r={-90} />
      <Tag t="MIC101" x={828} y={617} />
      <Tag t="TP207" x={880} y={598} r={-90} />
      <Tag t="TP206" x={879} y={615} />
      <Tag t="U202" x={930} y={622} />
      <Tag t="U201" x={984} y={607} r={-90} />
      <Tag t="U204" x={1282} y={631} />
      <Tag t="ANT201" x={921} y={666} />
      <Tag t="ANT202" x={982} y={672} />
      <Tag t="ANT203" x={1272} y={680} />
    </g>
  </svg>
);

const Viewer = () => (
  <div className="flex min-h-0 flex-1 bg-[#989898]">
    <div className="min-w-0 flex-1 overflow-hidden">
      <div className="mx-auto min-h-full w-full max-w-[951px] bg-white">
        <Board />
      </div>
    </div>
    <div className="flex w-[15px] shrink-0 flex-col border-l border-[#c4c4c4] bg-[#f4f4f4]">
      <button aria-label="Scroll up" className="flex h-4 items-center justify-center bg-white">
        <Chevron d="M0.5 5L4.5 1L8.5 5" />
      </button>
      <div className="flex h-80 flex-col items-center justify-center gap-px border-y border-[#a8a8a8] bg-[#dcdcdc]">
        <span className="h-0.5 w-[7px] bg-[#666]" />
        <span className="h-0.5 w-[7px] bg-[#666]" />
        <span className="h-0.5 w-[7px] bg-[#666]" />
      </div>
      <button aria-label="Scroll down" className="mt-auto flex h-3 items-center justify-center bg-white">
        <Chevron d="M0.5 1L4.5 5L8.5 1" />
      </button>
    </div>
  </div>
);

export default function App() {
  return (
    <div className="flex h-screen flex-col overflow-hidden bg-[#efefef] font-['DejaVu_Sans_Mono',monospace] text-[10px] leading-4 text-black">
      <TitleBar />
      <Banner />
      <main className="flex min-h-0 flex-1 border-r border-[#66cbea]">
        <SidePanel />
        <section className="flex min-w-0 flex-1 flex-col border-b-2 border-[#e8e8e8]">
          <DocTabs />
          <Toolbar />
          <Viewer />
        </section>
      </main>
      <footer className="flex h-[23px] shrink-0 items-end justify-between border-r border-b-2 border-[#66cbea] bg-[#44678d]">
        <span>Version:1.0.0.52</span>
        <span className="text-white">Current [H633_Sub_PCB_2_V1.1]</span>
      </footer>
    </div>
  );
}
